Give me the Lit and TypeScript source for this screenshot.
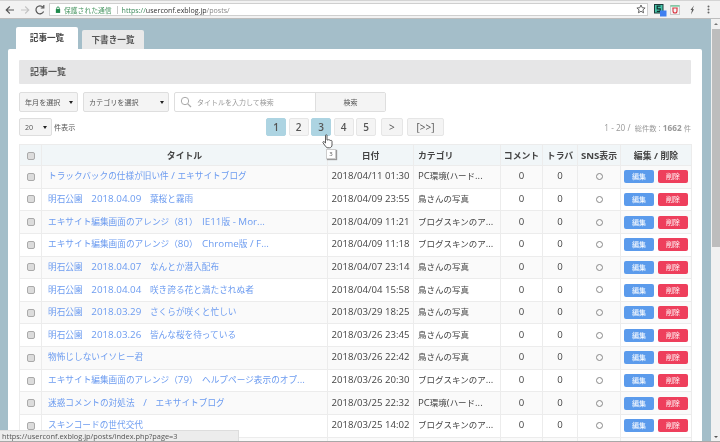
import { LitElement, html, css } from "lit";
import { customElement } from "lit/decorators.js";

const rows: [string, string, string][] = [
  ["トラックバックの仕様が旧い件 / エキサイトブログ", "2018/04/11 01:30", "PC環境(ハード..."],
  ["明石公園　2018.04.09　葉桜と霧雨", "2018/04/09 23:55", "鳥さんの写真"],
  ["エキサイト編集画面のアレンジ（81）　IE11版 - Mor...", "2018/04/09 11:21", "ブログスキンのア..."],
  ["エキサイト編集画面のアレンジ（80）　Chrome版 / F...", "2018/04/09 11:18", "ブログスキンのア..."],
  ["明石公園　2018.04.07　なんとか潜入配布", "2018/04/07 23:14", "鳥さんの写真"],
  ["明石公園　2018.04.04　咲き誇る花と満たされぬ者", "2018/04/04 15:58", "鳥さんの写真"],
  ["明石公園　2018.03.29　さくらが咲くと忙しい", "2018/03/29 18:25", "鳥さんの写真"],
  ["明石公園　2018.03.26　皆んな桜を待っている", "2018/03/26 23:45", "鳥さんの写真"],
  ["物怖じしないイソヒー君", "2018/03/26 22:42", "鳥さんの写真"],
  ["エキサイト編集画面のアレンジ（79）　ヘルプページ表示のオプ...", "2018/03/26 20:30", "ブログスキンのア..."],
  ["迷惑コメントの対処法　/　エキサイトブログ", "2018/03/25 22:32", "PC環境(ハード..."],
  ["スキンコードの世代交代", "2018/03/25 14:02", "ブログスキンのア..."],
];

const mix = (text: string) =>
  text
    .split(/([\u3000-\u9fff\uff00-\uffef]+)/)
    .map((part, i) => (i % 2 ? html`<span class="j">${part}</span>` : part));

@customElement("app-root")
export class AppRoot extends LitElement {
  static styles = css`
    :host {
      display: block;
      width: 720px;
      height: 442px;
      overflow: hidden;
      position: relative;
      font-family: "Open Sans", "Noto Sans CJK JP", sans-serif;
      font-size: 9.6px;
      color: #444;
      background: #a4bec9;
      filter: blur(0.3px);
    }
    .j { font-size: 0.885em; }
    .chrome {
      height: 19px;
      box-sizing: border-box;
      background: #f2f2f2;
      border-top: 1px solid #d4d4d4;
      border-bottom: 1px solid #bdbdbd;
      display: flex;
      align-items: center;
    }
    .nav { width: 49px; display: flex; align-items: center; flex: none; padding-left: 4px; gap: 3px; box-sizing: border-box; }
    .nav svg { width: 12px; height: 12px; flex: none; }
    .omni {
      width: 599px;
      height: 13px;
      box-sizing: border-box;
      background: #fff;
      border: 1px solid #cfcfcf;
      display: flex;
      align-items: center;
      font-size: 7.1px;
      padding-left: 5px;
      flex: none;
      position: relative;
    }
    .omni .lock { width: 6px; height: 7px; margin-right: 3px; }
    .secure { color: #4f9a68; font-size: 6.8px; }
    .sep { width: 1px; height: 8px; background: #c8c8c8; margin: 0 4px 0 5px; }
    .host { color: #3d8a5c; }
    .host b { font-weight: 400; color: #333; }
    .path { color: #888; }
    .star { position: absolute; right: 1px; top: 0; width: 10px; height: 10px; }
    .ext { display: flex; align-items: center; flex: none; padding-left: 5px; }
    .ext svg { flex: none; display: block; }
    .ext .e2 { margin-left: 3px; }
    .ext .e3 { margin-left: 8px; }
    .ext .e4 { margin-left: 11px; }
    .body { display: flex; height: 423px; }
    .content { width: 711px; flex: none; padding: 9px 9px 0 8px; box-sizing: border-box; }
    .tabs { display: flex; padding-left: 8px; gap: 4px; align-items: flex-end; height: 21px; }
    .tab {
      width: 62px;
      height: 19px;
      box-sizing: border-box;
      background: #e9e9e9;
      border-radius: 2px 2px 0 0;
      display: flex;
      align-items: center;
      justify-content: center;
      font-weight: 700;
      font-size: 8.6px;
      color: #555;
    }
    .tab.on { background: #fff; height: 22px; color: #444; padding-bottom: 1px; }
    .card {
      background: #fff;
      border-radius: 2px 2px 0 0;
      padding: 11px 11px 0;
      height: 400px;
      box-sizing: border-box;
      position: relative;
    }
    .panel {
      height: 24px;
      background: #e6e6e7;
      display: flex;
      align-items: center;
      padding-left: 11px;
      padding-bottom: 2px;
      box-sizing: border-box;
      font-weight: 700;
      font-size: 9px;
      color: #555;
      border-radius: 1px;
    }
    .filters { display: flex; margin-top: 8px; height: 20px; }
    .sel {
      box-sizing: border-box;
      background: #f4f4f4;
      border: 1px solid #dedede;
      border-radius: 2px;
      display: flex;
      align-items: center;
      justify-content: space-between;
      padding: 0 4px 0 5px;
      font-size: 7.1px;
      color: #555;
      height: 100%;
    }
    .sel::after {
      content: "";
      border: 2px solid transparent;
      border-top: 3px solid #222;
      border-bottom: 0;
    }
    .s1 { width: 59px; margin-right: 5px; }
    .s2 { width: 86px; margin-right: 5px; }
    .search {
      width: 212px;
      box-sizing: border-box;
      border: 1px solid #dedede;
      border-radius: 2px;
      display: flex;
      align-items: stretch;
      font-size: 7px;
      color: #999;
    }
    .search .q { flex: 1; display: flex; align-items: center; padding-left: 5px; gap: 5px; }
    .search .go {
      width: 69px;
      background: #f4f4f4;
      border-left: 1px solid #dedede;
      display: flex;
      align-items: center;
      justify-content: center;
      color: #555;
      font-size: 7.1px;
    }
    .row2 { display: flex; margin-top: 6px; height: 18px; align-items: center; }
    .s3 { width: 33px; margin-right: 2px; }
    .count { font-size: 7.1px; color: #555; width: 212px; }
    .pager { display: flex; gap: 2.5px; }
    .pg {
      width: 20px;
      height: 18px;
      box-sizing: border-box;
      background: #f4f4f4;
      border: 1px solid #e6e6e6;
      border-radius: 2px;
      display: flex;
      align-items: center;
      justify-content: center;
      font-weight: 600;
      font-size: 10px;
      color: #555;
    }
    .pg.on { background: #add4e2; border-color: #add4e2; }
    .pg.gt { width: 21.5px; margin-left: 2.5px; font-weight: 400; }
    .pg.end { width: 37px; margin-left: 2px; font-weight: 400; }
    .total { margin-left: auto; font-size: 8.2px; color: #999; }
    table {
      border-collapse: collapse;
      table-layout: fixed;
      width: 672px;
      margin-top: 8px;
    }
    th, td {
      border: 1px solid #ececec;
      padding: 0;
      text-align: center;
      white-space: nowrap;
      overflow: hidden;
      font-weight: 400;
    }
    th { background: #f1f6f8; font-weight: 700; height: 20px; color: #444; font-size: 9.6px; }
    th .j { font-size: 0.92em; }
    td { height: 19.65px; padding-bottom: 2px; }
    tbody tr:nth-child(odd) td { background: #fafafa; }
    td.t { text-align: left; padding-left: 6px; color: #6d9cf0; font-size: 9.8px; }
    td.t .j { font-size: 0.885em; }
    td.c { text-align: left; padding-left: 4px; }
    th.c { text-align: left; padding-left: 4px; }
    .box {
      display: inline-block;
      width: 6px;
      height: 6px;
      background: #dcdcdc;
      border: 1px solid #aaa;
      border-radius: 2px;
      vertical-align: middle;
    }
    .ring {
      display: inline-block;
      width: 5px;
      height: 5px;
      border: 1px solid #888;
      border-radius: 50%;
      vertical-align: middle;
    }
    .btns { display: flex; justify-content: center; gap: 4px; padding-top: 2px; }
    .btn {
      width: 30px;
      height: 13px;
      border-radius: 2px;
      color: #fff;
      font-size: 7px;
      line-height: 13px;
      text-align: center;
    }
    .edit { background: #5b9bec; }
    .del { background: #ee3f5c; }
    .scroll { width: 9px; flex: none; background: #f1f1f1; display: flex; flex-direction: column; }
    .arrow { height: 10px; display: flex; align-items: center; justify-content: center; flex: none; }
    .arrow::after { content: ""; border: 2px solid transparent; border-bottom: 2.5px solid #777; border-top: 0; }
    .arrow.down::after { border-top: 2.5px solid #555; border-bottom: 0; }
    .thumb { height: 218px; background: #bdbdbd; flex: none; margin-left: 1px; }
    .track { flex: 1; }
    .status {
      position: absolute;
      left: 0;
      bottom: 0;
      width: 239px;
      height: 12px;
      background: #ececec;
      border-top: 1px solid #ddd;
      border-right: 1px solid #ddd;
      box-sizing: border-box;
      font-size: 7.4px;
      line-height: 11px;
      color: #555;
      padding-left: 2px;
    }
    .edge { position: absolute; left: 0; right: 0; bottom: 0; height: 1px; background: #a8a8a8; }
    .tip {
      position: absolute;
      left: 326px;
      top: 149px;
      width: 10px;
      height: 10px;
      box-sizing: border-box;
      background: #fff;
      border: 1px solid #ccc;
      box-shadow: 1px 1px 1px #999;
      font-size: 6px;
      line-height: 8px;
      text-align: center;
      color: #555;
    }
    .hand { position: absolute; left: 322px; top: 134px; width: 12px; height: 15px; }
  `;

  render() {
    return html`
      <div class="chrome">
        <div class="nav">
          <svg viewBox="0 0 12 12"><path d="M10 6H2.500M5.800 2.500 2.200 6l3.600 3.500" fill="none" stroke="#555" stroke-width="1.100"/></svg>
          <svg viewBox="0 0 12 12"><path d="M2 6h7.500M6.200 2.500 9.800 6 6.200 9.500" fill="none" stroke="#c4c4c4" stroke-width="1.100"/></svg>
          <svg viewBox="0 0 12 12"><path d="M9.600 7.500A4 4 0 1 1 9 3.200M9.800 1v3H6.800" fill="none" stroke="#555" stroke-width="1.200"/></svg>
        </div>
        <div class="omni">
          <svg class="lock" viewBox="0 0 7 8"><path d="M2 4V2.500a1.500 1.500 0 0 1 3 0V4" fill="none" stroke="#1f8a4c" stroke-width="1"/><rect x="1" y="3.500" width="5" height="4.500" fill="#1f8a4c"/></svg>
          <span class="secure">保護された通信</span><span class="sep"></span>
          <span class="host">https://<b>userconf.exblog.jp</b></span><span class="path">/posts/</span>
          <svg class="star" viewBox="0 0 10 10"><path d="M5 1l1.200 2.700 2.900.3-2.200 1.900.7 2.900L5 7.300 2.400 8.800l.7-2.900L.9 4l2.900-.3z" fill="none" stroke="#666" stroke-width="1"/></svg>
        </div>
        <div class="ext">
          <svg width="14" height="14" viewBox="0 0 14 14">
            <rect x="1.500" y="1.500" width="8.500" height="8.500" fill="#45c4a8" stroke="#1c3b3a"/>
            <path d="M7.500 3.200H4.200v2.600h3v2.500H3.800" fill="none" stroke="#12302e" stroke-width="1.200"/>
            <rect x="7" y="7.500" width="6.500" height="6" fill="#3f7ff0"/>
          </svg>
          <svg class="e2" width="10" height="10" viewBox="0 0 10 10">
            <rect x=".5" y=".5" width="9" height="9" fill="#f4f4f4" stroke="#ccc"/>
            <path d="M.5 1h9" stroke="#3fbf7f"/>
            <path d="M3 3v3a2 2 0 0 0 4 0V3M2.300 3h5.400" fill="none" stroke="#d9343f" stroke-width="1.100"/>
          </svg>
          <svg class="e3" width="8" height="10" viewBox="0 0 8 10">
            <path d="M6 .5 2.500 5H4L3 9.500 6 4.300H4.500z" fill="#555"/>
          </svg>
          <svg class="e4" width="3" height="9" viewBox="0 0 3 9">
            <circle cx="1.500" cy="1.500" r="1" fill="#666"/><circle cx="1.500" cy="4.500" r="1" fill="#666"/><circle cx="1.500" cy="7.500" r="1" fill="#666"/>
          </svg>
        </div>
      </div>
      <div class="body">
        <div class="content">
          <div class="tabs"><div class="tab on">記事一覧</div><div class="tab">下書き一覧</div></div>
          <div class="card">
            <div class="panel">記事一覧</div>
            <div class="filters">
              <div class="sel s1">年月を選択</div>
              <div class="sel s2">カテゴリを選択</div>
              <div class="search">
                <div class="q">
                  <svg width="12" height="12" viewBox="0 0 12 12"><circle cx="5" cy="5" r="3.700" fill="none" stroke="#aaa"/><path d="M7.800 7.800 11 11" stroke="#aaa" stroke-width="1.200"/></svg>
                  タイトルを入力して検索
                </div>
                <div class="go">検索</div>
              </div>
            </div>
            <div class="row2">
              <div class="sel s3">20</div>
              <div class="count">件表示</div>
              <div class="pager">
                <div class="pg on">1</div><div class="pg">2</div><div class="pg on">3</div><div class="pg">4</div><div class="pg">5</div>
                <div class="pg gt">&gt;</div><div class="pg end">[&gt;&gt;]</div>
              </div>
              <div class="total">1 - 20 /&nbsp; ${mix("総件数")} : <b>1662</b> ${mix("件")}</div>
            </div>
            <table>
              <colgroup>
                <col style="width:22px"/><col style="width:286px"/><col style="width:86px"/><col style="width:87px"/>
                <col style="width:42px"/><col style="width:35px"/><col style="width:43px"/><col style="width:71px"/>
              </colgroup>
              <thead><tr>
                <th><span class="box"></span></th><th>${mix("タイトル")}</th><th>${mix("日付")}</th><th class="c">${mix("カテゴリ")}</th>
                <th>${mix("コメント")}</th><th>${mix("トラバ")}</th><th>SNS${mix("表示")}</th><th>${mix("編集")} / ${mix("削除")}</th>
              </tr></thead>
              <tbody>
                ${rows.map(
                  ([t, d, c]) => html`<tr>
                    <td><span class="box"></span></td>
                    <td class="t">${mix(t)}</td>
                    <td>${d}</td>
                    <td class="c">${mix(c)}</td>
                    <td>0</td><td>0</td>
                    <td><span class="ring"></span></td>
                    <td><div class="btns"><div class="btn edit">編集</div><div class="btn del">削除</div></div></td>
                  </tr>`
                )}
                <tr>
                  <td></td><td></td><td></td><td></td><td></td><td></td><td></td>
                  <td><div class="btns"><div class="btn edit"></div><div class="btn del"></div></div></td>
                </tr>
              </tbody>
            </table>
          </div>
        </div>
        <div class="scroll"><div class="arrow"></div><div class="thumb"></div><div class="track"></div><div class="arrow down"></div></div>
      </div>
      <svg class="hand" viewBox="0 0 12 15"><path d="M3.500 1.500c0-1 1.500-1 1.500 0V6h.5c.5-.6 1.300-.4 1.500.2.500-.5 1.300-.3 1.500.3.600-.4 1.500 0 1.500.8V11c0 1.500-1 2.800-2.500 2.800H6C4.800 13.800 4 13 3.300 12L1 8.800c-.5-.8.500-1.600 1.200-1l1.300 1.200z" fill="#fff" stroke="#333" stroke-width=".8"/></svg>
      <div class="tip">3</div>
      <div class="status">https://userconf.exblog.jp/posts/index.php?page=3</div>
      <div class="edge"></div>
    `;
  }
}
